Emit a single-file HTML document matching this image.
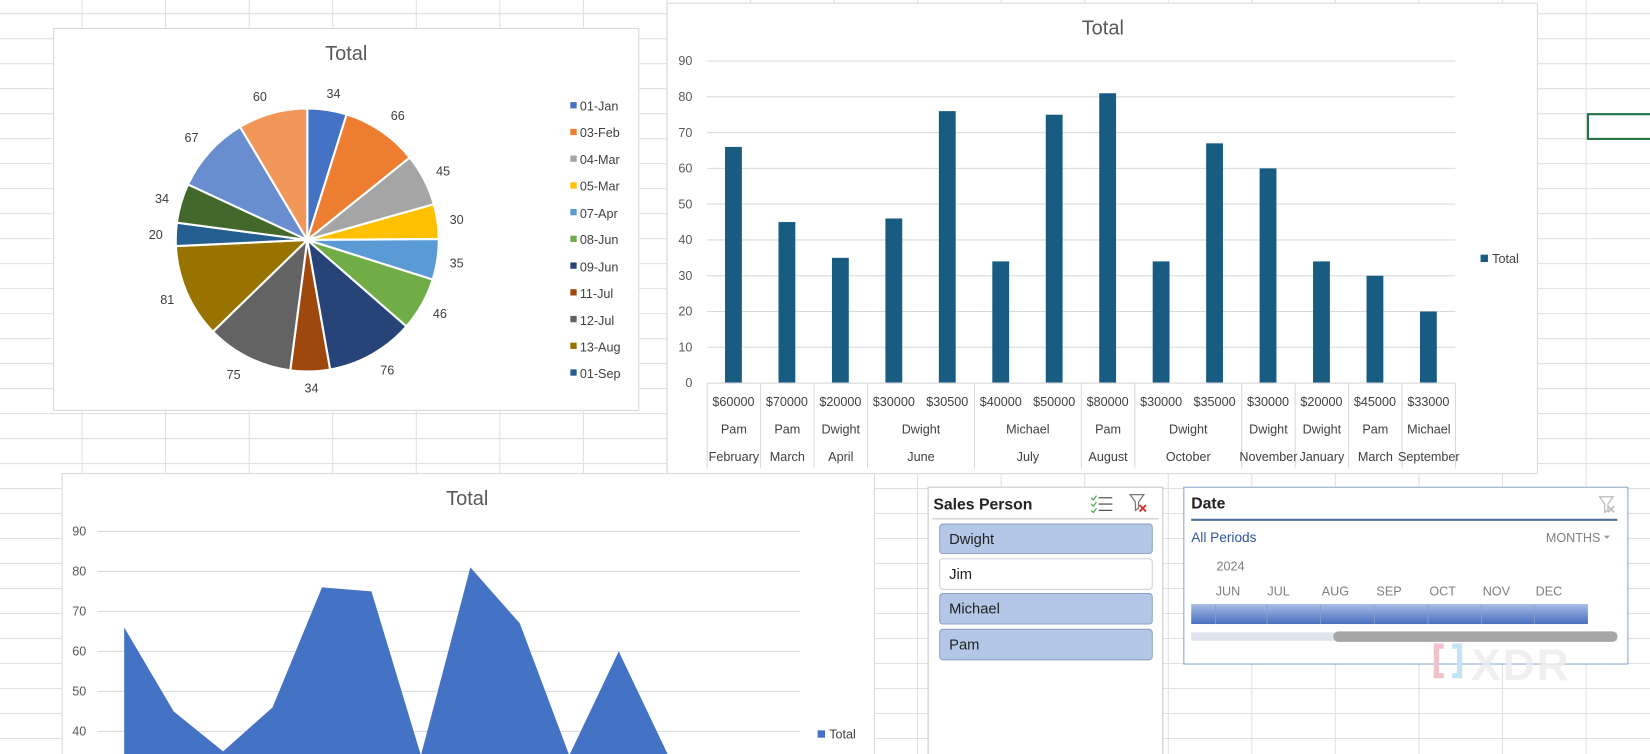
<!DOCTYPE html>
<html><head><meta charset="utf-8">
<style>
html,body{margin:0;padding:0;background:#fff;overflow:hidden;width:1650px;height:754px}
svg{display:block}
text{font-family:"Liberation Sans",sans-serif}
</style></head>
<body>
<svg id="s" width="1650" height="754" viewBox="0 0 1568 716.5" xmlns="http://www.w3.org/2000/svg">
<g id="grid" stroke="#e0e0e0" stroke-width="1"></g>
<rect x="1509" y="108.5" width="62" height="23.5" fill="none" stroke="#217346" stroke-width="2"/>

<!-- Pie chart -->
<rect x="51" y="27" width="556" height="363" fill="#fff" stroke="#d9d9d9"/>
<text x="329" y="57" font-size="19" fill="#595959" text-anchor="middle">Total</text>
<g id="pie" stroke="#fff" stroke-width="2"></g>
<g font-size="12" fill="#404040" text-anchor="middle">
<text x="317" y="93">34</text><text x="378" y="114">66</text><text x="421" y="167">45</text>
<text x="434" y="213">30</text><text x="434" y="254">35</text><text x="418" y="302">46</text>
<text x="368" y="356">76</text><text x="296" y="373">34</text><text x="222" y="360">75</text>
<text x="159" y="289">81</text><text x="148" y="227">20</text><text x="154" y="193">34</text>
<text x="182" y="135">67</text><text x="247" y="96">60</text>
</g>
<g id="leg" font-size="12" fill="#404040">
<text x="551" y="105">01-Jan</text><text x="551" y="130">03-Feb</text><text x="551" y="156">04-Mar</text>
<text x="551" y="181">05-Mar</text><text x="551" y="207">07-Apr</text><text x="551" y="232">08-Jun</text>
<text x="551" y="258">09-Jun</text><text x="551" y="283">11-Jul</text><text x="551" y="309">12-Jul</text>
<text x="551" y="334">13-Aug</text><text x="551" y="359">01-Sep</text>
</g>

<!-- Bar chart -->
<rect x="634" y="3" width="827" height="447" fill="#fff" stroke="#d9d9d9"/>
<text x="1048" y="33" font-size="19" fill="#595959" text-anchor="middle">Total</text>
<g id="bar"></g>
<rect x="1407" y="242" width="7" height="7" fill="#195c82"/>
<text x="1418" y="250" font-size="12" fill="#404040">Total</text>

<!-- Area chart -->
<rect x="59" y="450" width="772" height="280" fill="#fff" stroke="#d9d9d9"/>
<text x="444" y="480" font-size="19" fill="#595959" text-anchor="middle">Total</text>
<g id="area"></g>
<rect x="777" y="694" width="7" height="7" fill="#4472c4"/>
<text x="788" y="702" font-size="12" fill="#404040">Total</text>

<!-- Sales Person slicer -->
<rect x="882" y="463" width="223" height="265" fill="#fff" stroke="#c8c8c8"/>
<text x="887" y="484" font-size="15" font-weight="bold" fill="#222">Sales Person</text>
<g stroke="#555" stroke-width="1.2"><line x1="1044" y1="473" x2="1057" y2="473"/><line x1="1044" y1="479" x2="1057" y2="479"/><line x1="1044" y1="485" x2="1057" y2="485"/></g>
<g stroke="#4caf50" stroke-width="1.2" fill="none"><path d="M1037 473l2 2 3-4M1037 479l2 2 3-4M1037 485l2 2 3-4"/></g>
<path d="M1074 470h13l-5 7v6l-3 2v-8z" fill="none" stroke="#777" stroke-width="1.2"/>
<path d="M1083 480l6 6M1089 480l-6 6" stroke="#d32f2f" stroke-width="1.8"/>
<line x1="886" y1="493" x2="1101" y2="493" stroke="#c8c8c8"/>
<g font-size="14" fill="#222">
<rect x="893" y="498" width="202" height="28" rx="3" fill="#b4c7e7" stroke="#8fa2c4"/><text x="902" y="517">Dwight</text>
<rect x="893" y="531" width="202" height="29" rx="3" fill="#fff" stroke="#d0d0d0"/><text x="902" y="550">Jim</text>
<rect x="893" y="564" width="202" height="29" rx="3" fill="#b4c7e7" stroke="#8fa2c4"/><text x="902" y="583">Michael</text>
<rect x="893" y="598" width="202" height="29" rx="3" fill="#b4c7e7" stroke="#8fa2c4"/><text x="902" y="617">Pam</text>
</g>

<!-- Date slicer -->
<rect x="1125" y="463" width="422" height="168" fill="#fff" stroke="#8aa6cc"/>
<text x="1132" y="483" font-size="15" font-weight="bold" fill="#222">Date</text>
<path d="M1520 472h13l-5 7v6l-3 2v-8z" fill="none" stroke="#bbb" stroke-width="1.2"/>
<path d="M1528 481l6 6M1534 481l-6 6" stroke="#bbb" stroke-width="1.5"/>
<line x1="1132" y1="494" x2="1537" y2="494" stroke="#4f6f96" stroke-width="2"/>
<text x="1132" y="515" font-size="13" fill="#2f5597">All Periods</text>
<text x="1469" y="515" font-size="12" fill="#7f7f7f">MONTHS</text>
<path d="M1524 509h6l-3 3z" fill="#999"/>
<text x="1156" y="542" font-size="12" fill="#7f7f7f">2024</text>
<g font-size="12" fill="#7f7f7f" text-anchor="middle">
<text x="1167" y="566">JUN</text><text x="1215" y="566">JUL</text><text x="1269" y="566">AUG</text><text x="1320" y="566">SEP</text><text x="1371" y="566">OCT</text><text x="1422" y="566">NOV</text><text x="1472" y="566">DEC</text>
</g>
<defs><linearGradient id="gb" x1="0" y1="0" x2="0" y2="1"><stop offset="0" stop-color="#a9bde6"/><stop offset="1" stop-color="#4a6fc0"/></linearGradient></defs>
<rect x="1132" y="574" width="377" height="19" fill="url(#gb)"/>
<g stroke="#8aa0cc" stroke-width="0.8"><line x1="1155" y1="574" x2="1155" y2="593"/><line x1="1204" y1="574" x2="1204" y2="593"/><line x1="1255" y1="574" x2="1255" y2="593"/><line x1="1306" y1="574" x2="1306" y2="593"/><line x1="1357" y1="574" x2="1357" y2="593"/><line x1="1408" y1="574" x2="1408" y2="593"/><line x1="1458" y1="574" x2="1458" y2="593"/></g>
<rect x="1132" y="601" width="405" height="8" fill="#dfe4ef"/>
<rect x="1267" y="600" width="270" height="10" rx="5" fill="#a6a6a6"/>
<text x="1398" y="646" font-size="42" fill="#ececec" fill-opacity="0.85" font-weight="bold" letter-spacing="2">XDR</text>
<path d="M1372 614h-7v28h7" fill="none" stroke="#f2c2cc" stroke-width="5"/>
<path d="M1380 614h7v28h-7" fill="none" stroke="#c4e4f4" stroke-width="5"/>
</svg>
<script>
var NS="http://www.w3.org/2000/svg";
function el(p,t,a){var e=document.createElementNS(NS,t);for(var k in a)e.setAttribute(k,a[k]);p.appendChild(e);return e;}
var g=document.getElementById('grid');
for(var x=78;x<1568;x+=79.4)el(g,'line',{x1:x,y1:0,x2:x,y2:717});
for(var y=13;y<717;y+=23.75)el(g,'line',{x1:0,y1:y,x2:1568,y2:y});
var vals=[34,66,45,30,35,46,76,34,75,81,20,34,67,60];
var cols=['#4472c4','#ed7d31','#a5a5a5','#ffc000','#5b9bd5','#70ad47','#264478','#9e480e','#636363','#997300','#255e91','#43682b','#698ed0','#f1975a'];
var tot=vals.reduce(function(a,b){return a+b},0),cx=292,cy=228,r=125,a0=-Math.PI/2,pie=document.getElementById('pie');
vals.forEach(function(v,i){var a1=a0+v/tot*2*Math.PI;
el(pie,'path',{d:'M'+cx+' '+cy+'L'+(cx+r*Math.cos(a0))+' '+(cy+r*Math.sin(a0))+'A'+r+' '+r+' 0 0 1 '+(cx+r*Math.cos(a1))+' '+(cy+r*Math.sin(a1))+'Z',fill:cols[i]});a0=a1;});
var lg=document.getElementById('leg');
[0,1,2,3,4,5,6,7,8,9,10].forEach(function(i){var y=101+i*25.4;el(lg,'rect',{x:542,y:y-4,width:6,height:6,fill:cols[i]});});
var b=document.getElementById('bar');
for(var k=0;k<=9;k++){var yy=364-k*34;el(b,'line',{x1:672,y1:yy,x2:1383,y2:yy,stroke:'#d9d9d9'});
var t=el(b,'text',{x:658,y:yy+4,'font-size':12,fill:'#595959','text-anchor':'end'});t.textContent=k*10;}
var bv=[66,45,35,46,76,34,75,81,34,67,60,34,30,20];
bv.forEach(function(v,i){var c=697+i*50.8;el(b,'rect',{x:c-8,y:364-v*3.4,width:16,height:v*3.4,fill:'#195c82'});});
[0,1,2,3,5,7,8,10,11,12,13,14].forEach(function(i){el(b,'line',{x1:672+i*50.8,y1:364,x2:672+i*50.8,y2:445,stroke:'#d9d9d9'});});
el(b,'line',{x1:672,y1:364,x2:1383,y2:364,stroke:'#d9d9d9'});
var am=['$60000','$70000','$20000','$30000','$30500','$40000','$50000','$80000','$30000','$35000','$30000','$20000','$45000','$33000'];
am.forEach(function(s,i){var t=el(b,'text',{x:697+i*50.8,y:386,'font-size':12,fill:'#404040','text-anchor':'middle'});t.textContent=s;});
[['Pam',0,1,'February'],['Pam',1,2,'March'],['Dwight',2,3,'April'],['Dwight',3,5,'June'],['Michael',5,7,'July'],['Pam',7,8,'August'],['Dwight',8,10,'October'],['Dwight',10,11,'November'],['Dwight',11,12,'January'],['Pam',12,13,'March'],['Michael',13,14,'September']].forEach(function(a){var c=672+(a[1]+a[2])/2*50.8;
var t=el(b,'text',{x:c,y:412,'font-size':12,fill:'#404040','text-anchor':'middle'});t.textContent=a[0];
t=el(b,'text',{x:c,y:438,'font-size':12,fill:'#404040','text-anchor':'middle'});t.textContent=a[3];});
var ar=document.getElementById('area');
for(var k=4;k<=9;k++){var yy=847-k*38;el(ar,'line',{x1:93,y1:yy,x2:760,y2:yy,stroke:'#d9d9d9'});
var t=el(ar,'text',{x:82,y:yy+4,'font-size':12,fill:'#595959','text-anchor':'end'});t.textContent=k*10;}
var av=[66,45,35,46,76,75,34,81,67,34,60,34,30,20],d='M118 740';
av.forEach(function(v,i){d+='L'+(118+i*47)+' '+(847-v*3.8);});d+='L'+(118+13*47)+' 740Z';
el(ar,'path',{d:d,fill:'#4472c4'});
</script>
</body></html>
